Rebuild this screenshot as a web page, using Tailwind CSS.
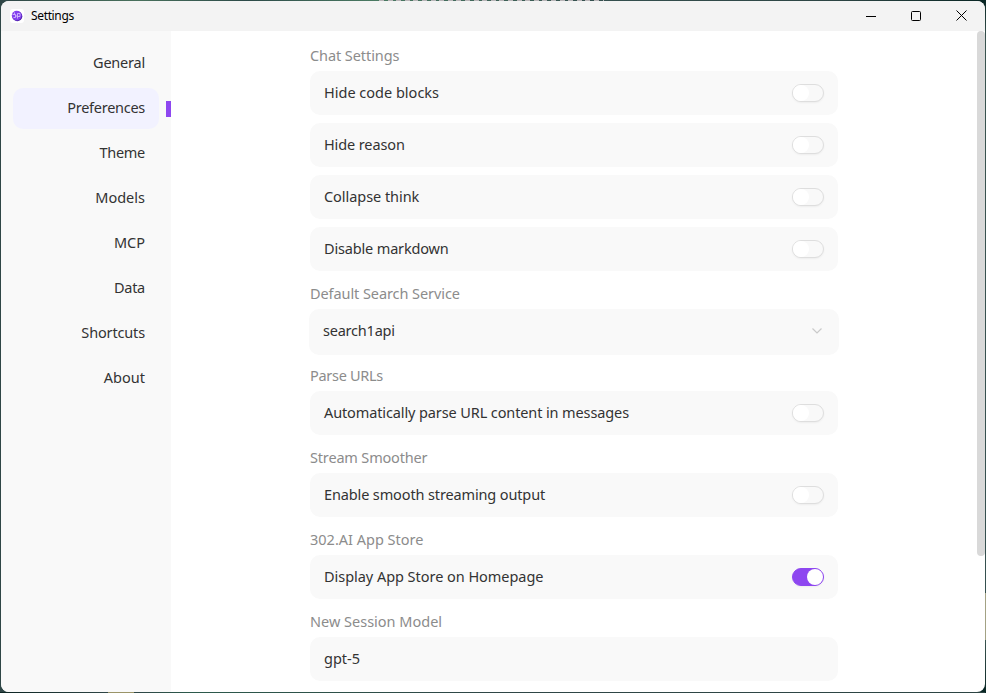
<!DOCTYPE html>
<html lang="en">
<head>
<meta charset="utf-8">
<title>Settings</title>
<script src="https://cdn.jsdelivr.net/npm/@tailwindcss/browser@4"></script>
</head>
<body class="h-[693px] w-[986px] overflow-hidden bg-[linear-gradient(90deg,#2f4646_0%,#48705c_14%,#2c4a48_25%,#4a7a62_38%,#35504f_60%,#2c4443_85%,#092624_100%)] p-px font-['Noto_Sans','Open_Sans',sans-serif]">
<div class="pointer-events-none absolute top-0 left-[379px] h-px w-[225px] bg-[repeating-linear-gradient(90deg,#b9b5b8_0_5px,transparent_5px_8.6px)]"></div>
<div class="pointer-events-none absolute top-[692px] left-0 h-px w-full bg-[linear-gradient(90deg,#0b2422_0,#2f4646_108px,#9a9468_108px,#9a9468_134px,#2f4646_134px,#2c5a4c_190px,#2f4646_50%,#2c4443_100%)]"></div>
<div class="pointer-events-none absolute top-0 left-[985px] h-[693px] w-px bg-[linear-gradient(180deg,#092624_0,#3a5450_40px,#35504f_593px,#a3a284_593px,#a3a284_640px,#3a5450_640px,#092624_100%)]"></div>
<div class="relative flex h-[691px] w-[984px] flex-col overflow-hidden rounded-lg bg-white">
  <header class="flex h-[30px] shrink-0 items-center bg-[#f3f3f3] pl-[9px]">
    <svg class="h-[14px] w-[14px]" viewBox="0 0 14 14">
      <rect width="14" height="14" rx="3" fill="#fff"/>
      <circle cx="7.3" cy="7.2" r="5" fill="#4c1fa8"/>
      <circle cx="6.7" cy="6.6" r="4.9" fill="#8440ee"/>
      <path d="M2.5 5.5H5.5V8.5H3.5M4.5 3.5V5.5M7.5 9.5V4.5H10V7.5H7.5M5.5 7H7.5" fill="none" stroke="#d9c4ff" stroke-width=".8"/>
    </svg>
    <span class="ml-[7px] text-[12px] leading-[30px] tracking-[-.35px] text-black">Settings</span>
    <div class="ml-auto flex h-full items-center">
      <div class="flex w-[46px] justify-center"><svg width="12" height="12" viewBox="0 0 12 12"><path d="M1 6.5H11" stroke="#000"/></svg></div>
      <div class="flex w-[44px] justify-center"><svg width="12" height="12" viewBox="0 0 12 12"><rect x="1.5" y="1.5" width="9" height="9" rx="1" fill="none" stroke="#000"/></svg></div>
      <div class="flex w-[47px] justify-center"><svg width="11" height="12" viewBox="0 0 11 12"><path d="M.5 .5L10.5 10.5M10.5 .5L.5 10.5" stroke="#000"/></svg></div>
    </div>
  </header>
  <div class="flex min-h-0 flex-1">
    <nav class="flex w-[170px] shrink-0 flex-col gap-1 bg-[#f9f9f9] pt-3 pl-3 text-right text-[14.5px] leading-[39px] text-[#333]">
      <div class="h-[41px] w-[146px] pr-[14px]"><span class="tracking-[-.22px]">General</span></div>
      <div class="flex items-center justify-between">
        <div class="h-[41px] w-[146px] rounded-[10px] bg-[#f2f2ff] pr-[14px]"><span class="tracking-[-.27px]">Preferences</span></div>
        <div class="h-4 w-[5px] bg-[#8e47f0]"></div>
      </div>
      <div class="h-[41px] w-[146px] pr-[14px]"><span class="tracking-[-.3px]">Theme</span></div>
      <div class="h-[41px] w-[146px] pr-[14px]"><span>Models</span></div>
      <div class="h-[41px] w-[146px] pr-[14px]"><span>MCP</span></div>
      <div class="h-[41px] w-[146px] pr-[14px]"><span class="tracking-[-.25px]">Data</span></div>
      <div class="h-[41px] w-[146px] pr-[14px]"><span class="tracking-[-.15px]">Shortcuts</span></div>
      <div class="h-[41px] w-[146px] pr-[14px]"><span>About</span></div>
    </nav>
    <main class="ml-[139px] w-[528px] shrink-0 text-[14.5px] text-[#333]">
      <h2 class="h-10 pt-[9px] leading-[30px] text-[#8c8c8c]"><span class="tracking-[-.08px]">Chat Settings</span></h2>
      <div class="flex flex-col gap-2">
        <div class="flex h-11 items-center justify-between rounded-[10px] bg-[#f9f9f9] px-[14px]"><span>Hide code blocks</span><i class="h-[18px] w-8 rounded-full border border-[#dedede] bg-[#f9f9f9] shadow-xs"><b class="block size-4 rounded-full bg-white"></b></i></div>
        <div class="flex h-11 items-center justify-between rounded-[10px] bg-[#f9f9f9] px-[14px]"><span class="tracking-[-.12px]">Hide reason</span><i class="h-[18px] w-8 rounded-full border border-[#dedede] bg-[#f9f9f9] shadow-xs"><b class="block size-4 rounded-full bg-white"></b></i></div>
        <div class="flex h-11 items-center justify-between rounded-[10px] bg-[#f9f9f9] px-[14px]"><span class="tracking-[-.05px]">Collapse think</span><i class="h-[18px] w-8 rounded-full border border-[#dedede] bg-[#f9f9f9] shadow-xs"><b class="block size-4 rounded-full bg-white"></b></i></div>
        <div class="flex h-11 items-center justify-between rounded-[10px] bg-[#f9f9f9] px-[14px]"><span class="tracking-[-.16px]">Disable markdown</span><i class="h-[18px] w-8 rounded-full border border-[#dedede] bg-[#f9f9f9] shadow-xs"><b class="block size-4 rounded-full bg-white"></b></i></div>
      </div>
      <h2 class="h-[38px] pt-[7px] leading-[30px] text-[#8c8c8c]"><span class="tracking-[-.08px]">Default Search Service</span></h2>
      <div class="mx-[-1px] flex h-[46px] w-[530px] items-center justify-between rounded-[10px] bg-[#f9f9f9] px-[14px] pb-[2px]"><span class="tracking-[-.22px]">search1api</span><svg class="mr-[2px]" width="12" height="12" viewBox="0 0 12 12"><path d="M1.5 3.5L6 8L10.5 3.5" fill="none" stroke="#cacaca" stroke-width="1.2"/></svg></div>
      <h2 class="h-9 pt-[5px] leading-[30px] text-[#8c8c8c]"><span class="tracking-[-.3px]">Parse URLs</span></h2>
      <div class="flex h-11 items-center justify-between rounded-[10px] bg-[#f9f9f9] px-[14px]"><span class="tracking-[-.115px]">Automatically parse URL content in messages</span><i class="h-[18px] w-8 rounded-full border border-[#dedede] bg-[#f9f9f9] shadow-xs"><b class="block size-4 rounded-full bg-white"></b></i></div>
      <h2 class="h-[38px] pt-[7px] leading-[30px] text-[#8c8c8c]"><span class="tracking-[-.17px]">Stream Smoother</span></h2>
      <div class="flex h-11 items-center justify-between rounded-[10px] bg-[#f9f9f9] px-[14px]"><span class="tracking-[-.13px]">Enable smooth streaming output</span><i class="h-[18px] w-8 rounded-full border border-[#dedede] bg-[#f9f9f9] shadow-xs"><b class="block size-4 rounded-full bg-white"></b></i></div>
      <h2 class="h-[38px] pt-[7px] leading-[30px] text-[#8c8c8c]"><span>302.AI App Store</span></h2>
      <div class="flex h-11 items-center justify-between rounded-[10px] bg-[#f9f9f9] px-[14px]"><span class="tracking-[-.04px]">Display App Store on Homepage</span><i class="flex h-[18px] w-8 justify-end rounded-full border border-[#8e47f0] bg-[#8e47f0] shadow-xs"><b class="block size-4 rounded-full bg-white"></b></i></div>
      <h2 class="h-[38px] pt-[7px] leading-[30px] text-[#8c8c8c]"><span>New Session Model</span></h2>
      <div class="flex h-11 items-center rounded-[10px] bg-[#f9f9f9] px-[14px]"><span>gpt-5</span></div>
    </main>
    <div class="ml-auto h-[525px] w-2 rounded-full bg-[#d9d9d9]"></div>
  </div>
</div>
</body>
</html>
